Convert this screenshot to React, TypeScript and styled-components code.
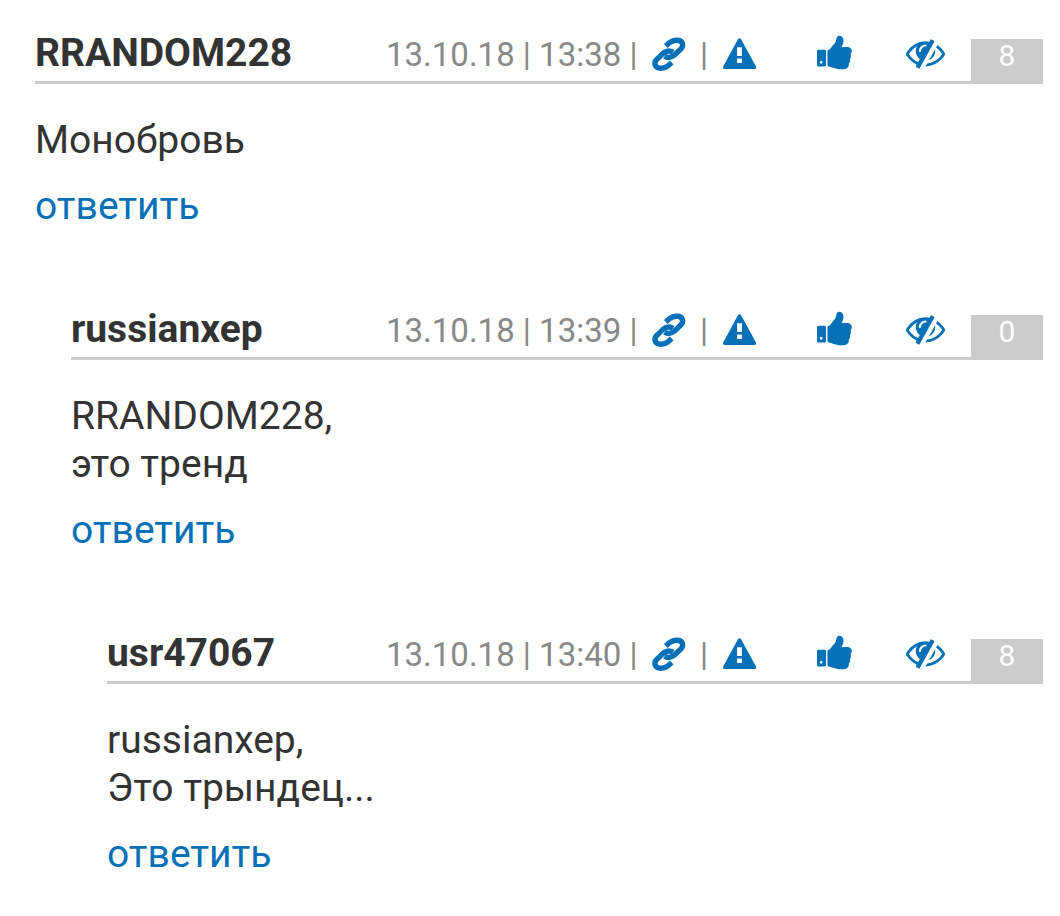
import styled, { createGlobalStyle } from "styled-components";

const GlobalStyle = createGlobalStyle`
    body {
        margin: 0;
        background-color: white;
        font-family: Roboto, sans-serif;
    }
`;
const Thread = styled.main`
    padding: 30px 17px 0 35px;
    color: #333;
`;
const CommentBox = styled.article<{ $level: number }>`
    margin-left: ${(props) => props.$level * 36}px;
    margin-bottom: 76px;
`;
const Header = styled.header`
    display: flex;
    align-items: flex-end;
    height: 54px;
`;
const HeaderMain = styled.div`
    box-sizing: border-box;
    display: flex;
    flex: 1;
    align-items: center;
    height: 54px;
    padding-bottom: 5px;
    border-bottom: 3px solid #cbcbcb;
`;
const Name = styled.strong`
    flex: 1;
    font-size: 39px;
    font-weight: 700;
    line-height: 46px;
`;
const Meta = styled.div`
    display: flex;
    align-items: center;
    width: 585px;
    color: #888;
    font-size: 33px;
    line-height: 40px;
`;
const Stamp = styled.span`
    width: 266px;
    padding-top: 3px;
    white-space: nowrap;
`;
const Divider = styled.span`
    width: 36px;
    padding-top: 3px;
    text-align: center;
`;
const IconButton = styled.button<{ $gap?: number }>`
    display: flex;
    margin: 0 ${(props) => props.$gap || 0}px 0 0;
    padding: 0;
    border: none;
    background: none;
    color: #0370b7;
    svg {
        display: block;
        fill: currentColor;
    }
`;
const Rating = styled.span`
    box-sizing: border-box;
    width: 72px;
    height: 45px;
    background-color: #cbcbcb;
    color: white;
    font-size: 30px;
    line-height: 33px;
    text-align: center;
`;
const Message = styled.p`
    margin: 32px 0 18px;
    font-size: 39px;
    line-height: 48px;
    white-space: pre-line;
`;
const Reply = styled.a`
    display: block;
    color: #0370b7;
    font-size: 39px;
    line-height: 48px;
    text-decoration: none;
`;

const LinkIcon = () => (
    <svg width="34" height="36" viewBox="0 -2.4 34 36">
        <g fill="none" stroke="currentColor" strokeWidth="5.4">
            <path d="M13.8 8.6L17.6 5.2C20.6 2.8 23.4 2.6 26 2.9C30.8 3.5 31.8 8.2 29.2 11.2L22.6 17.6C19.4 20.2 15.6 20.6 12.6 18.8" />
            <path d="M19.8 25L16 28.4C13 30.8 10.2 31 7.6 30.7C2.8 30.1 1.8 25.4 4.4 22.4L11 16C14.2 13.4 18 13 21 14.8" />
        </g>
    </svg>
);
const WarningIcon = () => (
    <svg width="36" height="33" viewBox="-1 -1 36 33">
        <path
            fillRule="evenodd"
            d="M14.9 1.2Q16.5 -0.8 18.1 1.2L33 28.6Q33.8 31 31.4 31H1.8Q-0.6 31 0.2 28.6ZM14.1 9.2V18H18.9V9.2ZM14.1 20.4V25H18.9V20.4Z"
        />
    </svg>
);
const ThumbIcon = () => (
    <svg width="39" height="41" viewBox="0 -1536 1792 1884">
        <path
            transform="scale(1 -1)"
            d="M256 192q0 26 -19 45t-45 19t-45 -19t-19 -45t19 -45t45 -19t45 19t19 45zM416 704v-640q0 -26 -19 -45t-45 -19h-288q-26 0 -45 19t-19 45v640q0 26 19 45t45 19h288q26 0 45 -19t19 -45zM1600 704q0 -86 -55 -149q15 -44 15 -76q3 -76 -43 -137q17 -56 0 -117q-15 -57 -54 -94q9 -112 -49 -181q-64 -76 -197 -78h-36h-76h-17q-66 0 -144 15.5t-121.5 29t-120.5 39.5q-123 43 -158 44q-26 1 -45 19.5t-19 44.5v641q0 25 18 43.5t43 20.5q24 2 76 59t101 121q68 87 101 120q18 18 31 48t17.5 48.5t13.5 60.5q7 39 12.5 61t19.5 52t34 50q19 19 45 19q46 0 82.5 -10.5t60 -26t40 -40.5t24 -45t12 -50t5 -45t.5 -39q0 -38 -9.5 -76t-19 -60t-27.5 -56q-3 -6 -10 -18t-11 -22t-8 -24h277q78 0 135 -57t57 -135z"
        />
    </svg>
);
const HideIcon = () => (
    <svg width="39" height="41" viewBox="0 -1536 1792 1884">
        <path
            transform="scale(1 -1)"
            d="M555 201l78 141q-87 63 -136 159t-49 203q0 121 61 225q-229 -117 -381 -353q167 -258 427 -375zM944 960q0 20 -14 34t-34 14q-125 0 -214.5 -89.5t-89.5 -214.5q0 -20 14 -34t34 -14t34 14t14 34q0 86 61 147t147 61q20 0 34 14t14 34zM1307 1151q0 -7 -1 -9q-105 -188 -315 -566t-316 -567l-49 -89q-10 -16 -28 -16q-12 0 -134 70q-16 10 -16 28q0 12 44 87q-143 65 -263.5 173t-208.5 245q-20 31 -20 69t20 69q153 235 380 371t496 136q89 0 180 -17l54 97q10 16 28 16q5 0 18 -6t31 -15.5t33 -18.5t31.5 -18.5t19.5 -11.5q16 -10 16 -27zM1344 704q0 -139 -79 -253.5t-209 -164.5l280 502q8 -45 8 -84zM1792 576q0 -35 -20 -69q-39 -64 -109 -145q-150 -172 -347.5 -267t-419.5 -95l74 132q212 18 392.5 137t301.5 307q-115 179 -282 294l63 112q95 -64 182.5 -153t144.5 -184q20 -34 20 -69z"
        />
    </svg>
);

interface IComment {
    name: string,
    time: string,
    rating: number,
    text: string
}
const comments: IComment[] = [
    { name: "RRANDOM228", time: "13:38", rating: 8, text: "Монобровь" },
    { name: "russianxep", time: "13:39", rating: 0, text: "RRANDOM228,\nэто тренд" },
    { name: "usr47067", time: "13:40", rating: 8, text: "russianxep,\nЭто трындец..." },
];

export default function App() {
    return (
        <>
        <GlobalStyle />
        <Thread>
            {comments.map(({ name, time, rating, text }, level) => (
                <CommentBox key={name} $level={level}>
                    <Header>
                        <HeaderMain>
                            <Name>{name}</Name>
                            <Meta>
                                <Stamp>13.10.18 | {time} |</Stamp>
                                <IconButton aria-label="Ссылка"><LinkIcon /></IconButton>
                                <Divider>|</Divider>
                                <IconButton aria-label="Пожаловаться" $gap={59}><WarningIcon /></IconButton>
                                <IconButton aria-label="Нравится" $gap={50}><ThumbIcon /></IconButton>
                                <IconButton aria-label="Скрыть"><HideIcon /></IconButton>
                            </Meta>
                        </HeaderMain>
                        <Rating>{rating}</Rating>
                    </Header>
                    <Message>{text}</Message>
                    <Reply>ответить</Reply>
                </CommentBox>
            ))}
        </Thread>
        </>
    );
}
